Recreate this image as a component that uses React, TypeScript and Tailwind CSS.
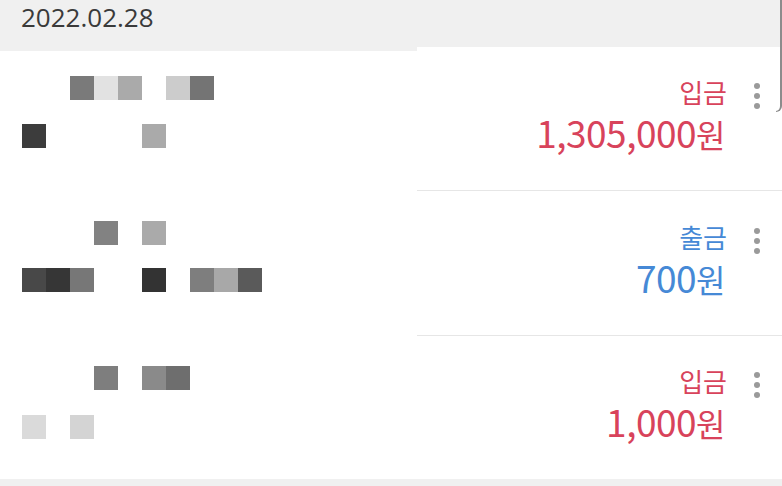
type Cell = { col: number; bg: string };

type Tx = {
  kind: "in" | "out";
  amount: string;
  height: string;
  padTop: string;
  gap: string;
  labelTop: string;
  top: Cell[];
  bottom: Cell[];
};

const TXS: Tx[] = [
  {
    kind: "in",
    amount: "1,305,000",
    height: "h-[143px]",
    padTop: "pt-[25px]",
    gap: "gap-[24px]",
    labelTop: "pt-[32px]",
    top: [
      { col: 2, bg: "bg-[#7a7a7a]" },
      { col: 3, bg: "bg-[#e2e2e2]" },
      { col: 4, bg: "bg-[#aaaaaa]" },
      { col: 6, bg: "bg-[#cccccc]" },
      { col: 7, bg: "bg-[#747474]" },
    ],
    bottom: [
      { col: 0, bg: "bg-[#3c3c3c]" },
      { col: 5, bg: "bg-[#aaaaaa]" },
    ],
  },
  {
    kind: "out",
    amount: "700",
    height: "h-[145px]",
    padTop: "pt-[31px]",
    gap: "gap-[23px]",
    labelTop: "pt-[33px]",
    top: [
      { col: 3, bg: "bg-[#828282]" },
      { col: 5, bg: "bg-[#aaaaaa]" },
    ],
    bottom: [
      { col: 0, bg: "bg-[#484848]" },
      { col: 1, bg: "bg-[#363636]" },
      { col: 2, bg: "bg-[#777777]" },
      { col: 5, bg: "bg-[#333333]" },
      { col: 7, bg: "bg-[#7e7e7e]" },
      { col: 8, bg: "bg-[#a8a8a8]" },
      { col: 9, bg: "bg-[#5a5a5a]" },
    ],
  },
  {
    kind: "in",
    amount: "1,000",
    height: "h-[144px]",
    padTop: "pt-[31px]",
    gap: "gap-[25px]",
    labelTop: "pt-[32px]",
    top: [
      { col: 3, bg: "bg-[#7e7e7e]" },
      { col: 5, bg: "bg-[#8a8a8a]" },
      { col: 6, bg: "bg-[#6e6e6e]" },
    ],
    bottom: [
      { col: 0, bg: "bg-[#dadada]" },
      { col: 2, bg: "bg-[#d4d4d4]" },
    ],
  },
];

// blurred/mosaic name — one row of 24px cells
function Mosaic({ cells }: { cells: Cell[] }) {
  return (
    <div className="grid grid-cols-[repeat(10,24px)] h-[24px]">
      {cells.map((c) => (
        <div key={c.col} className={`h-[24px] ${c.bg}`} style={{ gridColumnStart: c.col + 1 }} />
      ))}
    </div>
  );
}

function Kebab() {
  return (
    <div className="flex flex-col items-center gap-[4px] w-[10px]">
      <span className="w-[6px] h-[6px] rounded-full bg-[#9a9a9a]" />
      <span className="w-[6px] h-[6px] rounded-full bg-[#9a9a9a]" />
      <span className="w-[6px] h-[6px] rounded-full bg-[#9a9a9a]" />
    </div>
  );
}

function Row({ tx, first }: { tx: Tx; first: boolean }) {
  const color = tx.kind === "in" ? "text-[#d8435b]" : "text-[#4689d6]";
  return (
    <div className={`flex ${tx.height}`}>
      <div className={`w-[417px] pl-[22px] ${first ? "border-t-4 border-[#f0f0f0]" : ""}`}>
        <div className={`flex flex-col ${first ? "pt-[25px]" : tx.padTop} ${tx.gap}`}>
          <Mosaic cells={tx.top} />
          <Mosaic cells={tx.bottom} />
        </div>
      </div>
      <div className={`flex-1 flex justify-end pr-[20px] ${tx.labelTop} ${first ? "" : "border-t border-[#e6e6e6]"}`}>
        <div className={`flex flex-col items-end ${color}`}>
          <div className="text-[26px] leading-[26px] mr-[-2px]">{tx.kind === "in" ? "입금" : "출금"}</div>
          <div className="mt-[3px] text-[37px] leading-[48px] tracking-[-0.5px]">
            {tx.amount}
            <span className="text-[32px]">원</span>
          </div>
        </div>
        <div className="ml-[27px] pt-[4px]">
          <Kebab />
        </div>
      </div>
    </div>
  );
}

export default function App() {
  return (
    <div
      className="relative w-[782px] h-[486px] overflow-hidden bg-white"
      style={{ fontFamily: '"Noto Sans CJK KR", "Noto Sans", sans-serif' }}
    >
      <div className="h-[47px] bg-[#f0f0f0] pl-[21px] flex items-center">
        <span className="text-[26px] text-[#3a3a3a] leading-none pb-[14px]" style={{ fontFamily: '"Open Sans", "Noto Sans", sans-serif' }}>
          2022.02.28
        </span>
      </div>
      {TXS.map((tx, i) => (
        <Row key={i} tx={tx} first={i === 0} />
      ))}
      <div className="h-[8px] bg-[#f0f0f0]" />
      {/* device frame edge on the right */}
      <div className="absolute top-0 right-0 w-[6px] h-[112px] border-r-2 border-b border-[#8c8c8c] rounded-br-[6px]" />
    </div>
  );
}
